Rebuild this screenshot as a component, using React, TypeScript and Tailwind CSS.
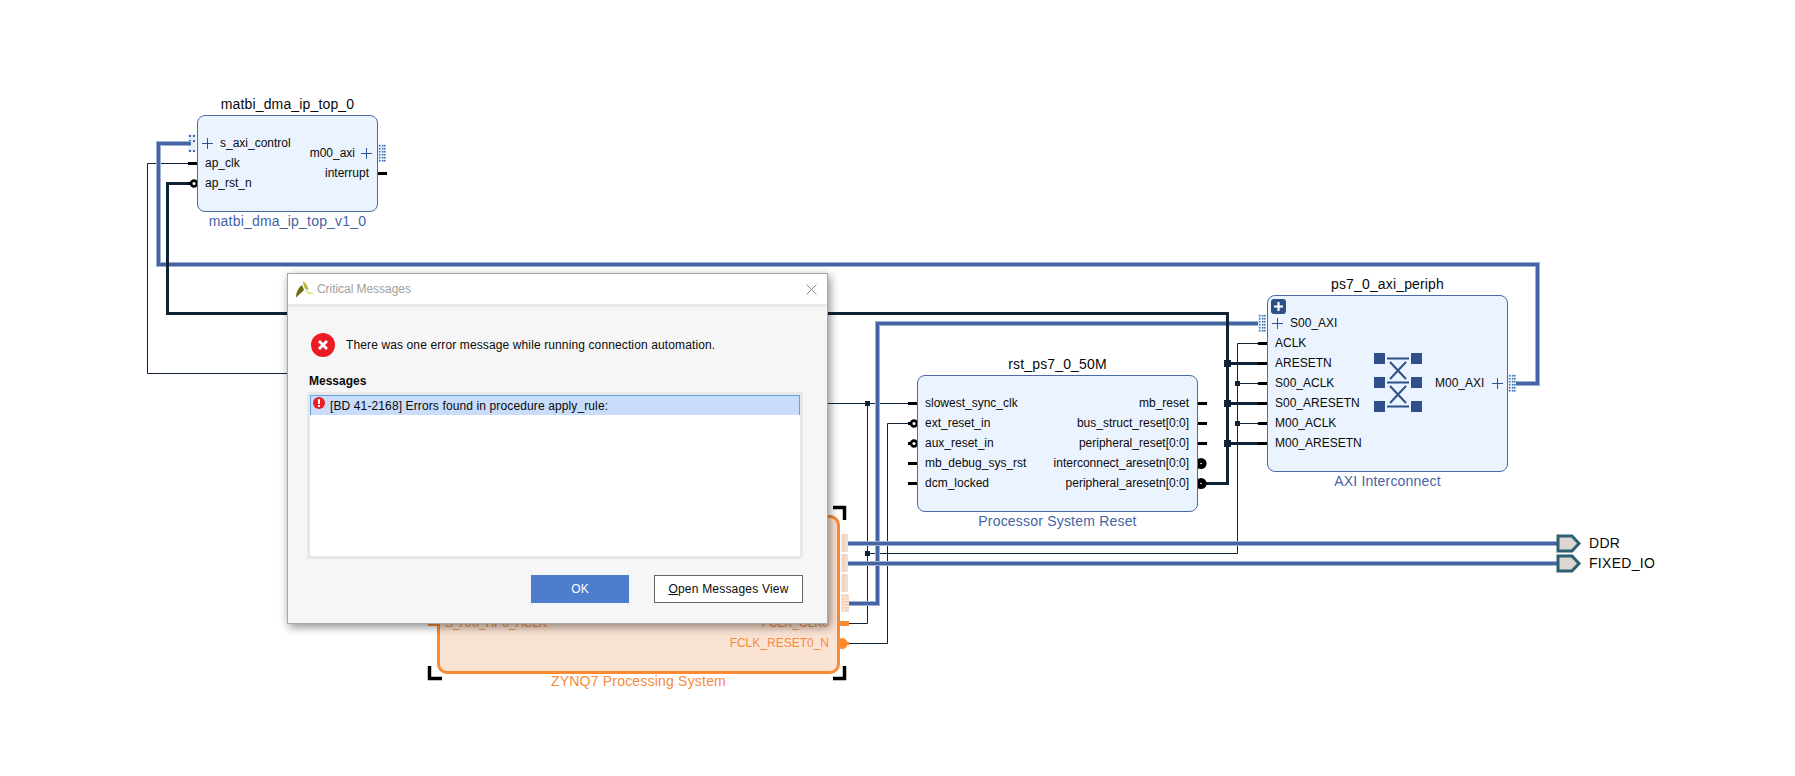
import React from "react";

const BUS = "#4464a4";
const BUS_EDGE = "#9fb1d3";
const NET = "#0f2338";
const ORANGE = "#fb8a33";

function Bus({ d }: { d: string }) {
  return (
    <g fill="none" strokeLinejoin="miter">
      <path d={d} stroke={BUS_EDGE} strokeWidth={5} />
      <path d={d} stroke={BUS} strokeWidth={3} />
    </g>
  );
}
function Thick({ d }: { d: string }) {
  return <path d={d} fill="none" stroke={NET} strokeWidth={3} />;
}
function Thin({ d }: { d: string }) {
  return <path d={d} fill="none" stroke={NET} strokeWidth={1} />;
}
function Dot({ x, y, s = 5 }: { x: number; y: number; s?: number }) {
  return <rect x={x - s / 2} y={y - s / 2} width={s} height={s} fill={NET} />;
}
function Stub({ x, y, w = 9, c = "#000" }: { x: number; y: number; w?: number; c?: string }) {
  return <rect x={x} y={y - 1.5} width={w} height={3} fill={c} />;
}
function Bubble({ x, y }: { x: number; y: number }) {
  return (
    <g>
      <rect x={x - 6} y={y - 1.5} width={5} height={3} fill="#000" />
      <circle cx={x} cy={y} r={2.9} fill="#fff" stroke="#000" strokeWidth={2.6} />
    </g>
  );
}
function FilledBubble({ x, y }: { x: number; y: number }) {
  return (
    <g>
      <circle cx={x} cy={y} r={5.6} fill="#000" />
      <circle cx={x} cy={y} r={0.8} fill="#fff" />
    </g>
  );
}
function DotPort({ x, y, h = 18, fill = "#e6eef9", dot = "#3a70ac" }: { x: number; y: number; h?: number; fill?: string; dot?: string }) {
  const rows = Array.from({ length: Math.floor(h / 3) }, (_, i) => i);
  return (
    <g>
      <rect x={x} y={y} width={8} height={h} fill={fill} />
      {rows.map((r) =>
        [1, 4, 6].map((c) => <rect key={`${r}-${c}`} x={x + c} y={y + 1 + r * 3} width={1.5} height={1.5} fill={dot} />)
      )}
    </g>
  );
}

function Wires() {
  return (
    <svg className="absolute left-0 top-0" width={1795} height={776} viewBox="0 0 1795 776">
      {/* thin nets */}
      <Thin d="M188 163.5H147.5V373.5H300" />
      <Thin d="M790 403.5H908" />
      <Thin d="M867.5 403.5V623.5H846" />
      <Thin d="M867.5 553.5H1237.5V343.5H1260" />
      <Thin d="M1237.5 383.5H1260" />
      <Thin d="M1237.5 423.5H1260" />
      <Thin d="M846 643.5H887.5V423.5H908" />

      {/* interface buses */}
      <rect x={188} y={134} width={8} height={18} fill="#e6eef9" />
      {[135, 140, 150].map((y) => (
        <g key={y}>
          <rect x={189} y={y} width={2} height={2} fill="#3a70ac" />
          <rect x={193} y={y} width={2} height={2} fill="#3a70ac" />
        </g>
      ))}
      <Bus d="M191 143.5H158.5V264.5H1537.5V383.5H1516" />
      <Bus d="M846 603.5H877.5V323.5H1260" />
      <Bus d="M846 543.5H1558" />
      <Bus d="M846 563.5H1558" />

      {/* thick resets */}
      <Thick d="M188 183.5H167.5V313.5H1227.5V483.5H1205" />
      <Thick d="M1227.5 363.5H1258" />
      <Thick d="M1227.5 403.5H1258" />
      <Thick d="M1227.5 443.5H1258" />
      <Dot x={1227.5} y={363.5} s={7} />
      <Dot x={1227.5} y={403.5} s={7} />
      <Dot x={1227.5} y={443.5} s={7} />
      <Dot x={1237.5} y={383.5} />
      <Dot x={1237.5} y={423.5} />
      <Dot x={867.5} y={403.5} />
      <Dot x={867.5} y={553.5} />

      {/* matbi pins */}
      <Stub x={188} y={163.5} />
      <Bubble x={194} y={183.5} />
      <DotPort x={378} y={144} />
      <Stub x={378} y={173.5} />

      {/* rst pins */}
      <Stub x={908} y={403.5} />
      <Bubble x={914} y={423.5} />
      <Bubble x={914} y={443.5} />
      <Stub x={908} y={463.5} />
      <Stub x={908} y={483.5} />
      <Stub x={1198} y={403.5} />
      <Stub x={1198} y={423.5} />
      <Stub x={1198} y={443.5} />
      <FilledBubble x={1201} y={463.5} />
      <FilledBubble x={1201} y={483.5} />

      {/* axi pins */}
      <DotPort x={1258} y={314} />
      <Stub x={1258} y={343.5} />
      <Stub x={1258} y={363.5} />
      <Stub x={1258} y={383.5} />
      <Stub x={1258} y={403.5} />
      <Stub x={1258} y={423.5} />
      <Stub x={1258} y={443.5} />
      <DotPort x={1508} y={374} />

      {/* zynq pins */}
      {[534, 554, 574].map((y) => (
        <g key={y}>
          <rect x={841} y={y} width={7} height={18} fill="#f6dccb" />
          <rect x={843} y={y} width={2} height={18} fill="#ecd5c6" />
        </g>
      ))}
      <DotPort x={841} y={594} h={18} fill="#fae6d9" dot="#f3c3a3" />
      {[543.5, 563.5, 583.5, 603.5].map((y) => (
        <rect key={y} x={826} y={y - 0.5} width={7} height={1} fill={NET} />
      ))}
      <rect x={428} y={621} width={10} height={5} fill={ORANGE} />
      <rect x={839} y={621} width={10} height={5} fill={ORANGE} />
      <circle cx={842} cy={643.5} r={5.5} fill={ORANGE} />
      <rect x={846} y={642} width={3} height={3} fill={ORANGE} />

      {/* selection corners */}
      <path d="M833 507.5H844.5V520" fill="none" stroke="#000" strokeWidth={3.5} />
      <path d="M429.5 666V678.5H442" fill="none" stroke="#000" strokeWidth={3.5} />
      <path d="M844.5 666V678.5H833" fill="none" stroke="#000" strokeWidth={3.5} />

      {/* external ports */}
      {[543.5, 563.5].map((y) => (
        <path key={y} d={`M1558 ${y - 7.5}H1572L1579 ${y}L1572 ${y + 7.5}H1558Z`} fill="#ddd5d0" stroke="#2d6072" strokeWidth={3} />
      ))}
    </svg>
  );
}

function PlusMark({ className = "" }: { className?: string }) {
  return (
    <svg width="11" height="11" viewBox="0 0 11 11" className={`shrink-0 ${className}`}>
      <path d="M0 5.5H11M5.5 0V11" stroke="#2f5590" strokeWidth="1" />
    </svg>
  );
}

function Row({ children }: { children: React.ReactNode }) {
  return <div className="flex h-5 items-center whitespace-nowrap text-[12px] text-[#0a0a0a]">{children}</div>;
}

function Block({
  className,
  boxClass,
  title,
  label,
  children,
}: {
  className: string;
  boxClass: string;
  title: string;
  label: string;
  children: React.ReactNode;
}) {
  return (
    <div className={`absolute flex flex-col items-center ${className}`}>
      <div className="h-5 whitespace-nowrap text-[14px] leading-[18px] tracking-[0.15px] text-[#0a0a0a]">{title}</div>
      <div className={`flex w-full rounded-[8px] border border-[#4a6aa5] bg-[#ebf4fe] ${boxClass}`}>{children}</div>
      <div className="h-[18px] whitespace-nowrap text-[14px] leading-[18px] tracking-[0.2px] text-[#4464a4]">{label}</div>
    </div>
  );
}

function CrossIcon() {
  const sq = [
    [0, 0],
    [37, 0],
    [0, 24],
    [37, 24],
    [0, 48],
    [37, 48],
  ];
  return (
    <svg width="48" height="59" viewBox="0 0 48 59" className="mt-[57px] shrink-0">
      {sq.map(([x, y]) => (
        <rect key={`${x}-${y}`} x={x} y={y} width="11" height="11" fill="#2f5088" />
      ))}
      <path d="M13 5.5H35M13 29.5H35M13 53.5H35" stroke="#2f5088" strokeWidth="2" />
      <path d="M16 9L32 26M32 9L16 26M16 33L32 50M32 33L16 50" stroke="#2f5088" strokeWidth="2" />
    </svg>
  );
}

function Dialog() {
  return (
    <div className="absolute left-[287px] top-[273px] flex h-[351px] w-[541px] flex-col border border-[#a8a8a8] bg-[#f6f6f6] shadow-[2px_3px_9px_rgba(0,0,0,0.45)]">
      <div className="flex h-[30px] items-center justify-between bg-white pl-[8px] pr-[10px]">
        <div className="flex items-center gap-[3px]">
          <svg width="18" height="17" viewBox="0 0 18 17">
            <path d="M7 0C10 2 12 5 12.5 9L9 8C8 5 7 3 7 0Z" fill="#b5b53c" />
            <path d="M9 9L18 12.5C15 14.5 11 14 9 9Z" fill="#dfe48f" />
            <path d="M6 4L8 9C6 11 3 14 0 16.5C0 12 2 7 6 4Z" fill="#6f6a12" />
          </svg>
          <span className="text-[12px] tracking-[-0.05px] text-[#a0a0a0]">Critical Messages</span>
        </div>
        <svg width="11" height="11" viewBox="0 0 11 11">
          <path d="M0.5 0.5L10.5 10.5M10.5 0.5L0.5 10.5" stroke="#8a8a8a" strokeWidth="1" />
        </svg>
      </div>
      <div className="h-[3px] bg-[#e8e8e8]" />
      <div className="flex flex-1 flex-col pl-[19px] pr-[24px]">
        <div className="mt-[26px] flex items-center pl-[4px]">
          <svg width="24" height="24" viewBox="0 0 24 24">
            <circle cx="12" cy="12" r="12" fill="#ec1c24" />
            <path d="M8 8L16 16M16 8L8 16" stroke="#fff" strokeWidth="2.8" />
          </svg>
          <span className="ml-[11px] whitespace-nowrap text-[12px] tracking-[0.12px] text-[#0a0a0a]">There was one error message while running connection automation.</span>
        </div>
        <div className="ml-[2px] mt-[17px] h-[14px] text-[12px] font-bold leading-[14px] text-[#0a0a0a]">Messages</div>
        <div className="mt-[4px] h-[167px] border-[3px] border-[#e8e8e8] bg-white">
          <div className="flex h-[20px] items-center border border-b-0 border-[#62a3e6] bg-[#c9dcf9] pl-[1px]">
            <svg width="14" height="14" viewBox="0 0 14 14" className="mb-[6px]">
              <circle cx="7" cy="7" r="6" fill="#ec1c24" />
              <rect x="6" y="3" width="2" height="5" fill="#fff" />
              <rect x="6" y="9" width="2" height="2" fill="#fff" />
            </svg>
            <span className="ml-[4px] whitespace-nowrap text-[12px] tracking-[0.12px] text-[#0a0a0a]">[BD 41-2168] Errors found in procedure apply_rule:</span>
          </div>
        </div>
        <div className="mt-[16px] flex justify-end gap-[25px]">
          <button className="h-[28px] w-[98px] bg-[#4f7dce] text-[12px] text-white">OK</button>
          <button className="h-[28px] w-[149px] border border-[#666] bg-white text-[12px] tracking-[0.2px] text-[#0a0a0a]">
            <span className="underline">O</span>pen Messages View
          </button>
        </div>
      </div>
    </div>
  );
}

export default function App() {
  return (
    <div className="relative h-[776px] w-[1795px] overflow-hidden bg-white font-['Liberation_Sans',sans-serif]">
      <Wires />

      <Block
        className="left-[197px] top-[95px] w-[181px]"
        boxClass="h-[97px] justify-between"
        title="matbi_dma_ip_top_0"
        label="matbi_dma_ip_top_v1_0"
      >
        <div className="pl-[7px] pt-[17px]">
          <Row>
            <PlusMark className="-ml-[3px] mr-[7px]" />
            s_axi_control
          </Row>
          <Row>ap_clk</Row>
          <Row>ap_rst_n</Row>
        </div>
        <div className="flex flex-col items-end pr-[8px] pt-[27px]">
          <Row>
            m00_axi
            <PlusMark className="-mr-[3px] ml-[6px]" />
          </Row>
          <Row>interrupt</Row>
        </div>
      </Block>

      <Block
        className="left-[917px] top-[355px] w-[281px]"
        boxClass="h-[137px] justify-between"
        title="rst_ps7_0_50M"
        label="Processor System Reset"
      >
        <div className="pl-[7px] pt-[17px]">
          <Row>slowest_sync_clk</Row>
          <Row>ext_reset_in</Row>
          <Row>aux_reset_in</Row>
          <Row>mb_debug_sys_rst</Row>
          <Row>dcm_locked</Row>
        </div>
        <div className="flex flex-col items-end pr-[8px] pt-[17px]">
          <Row>mb_reset</Row>
          <Row>bus_struct_reset[0:0]</Row>
          <Row>peripheral_reset[0:0]</Row>
          <Row>interconnect_aresetn[0:0]</Row>
          <Row>peripheral_aresetn[0:0]</Row>
        </div>
      </Block>

      <Block
        className="left-[1267px] top-[275px] w-[241px]"
        boxClass="h-[177px]"
        title="ps7_0_axi_periph"
        label="AXI Interconnect"
      >
        <div className="w-[106px] shrink-0 pl-[7px] pt-[3px]">
          <div className="-mb-[1px] -ml-[4px] flex h-[15px] w-[15px] items-center justify-center rounded-[3px] bg-[#2d5086]">
            <svg width="9" height="9" viewBox="0 0 9 9">
              <path d="M0 4.5H9M4.5 0V9" stroke="#fff" strokeWidth="2.2" />
            </svg>
          </div>
          <Row>
            <PlusMark className="-ml-[3px] mr-[7px]" />
            S00_AXI
          </Row>
          <Row>ACLK</Row>
          <Row>ARESETN</Row>
          <Row>S00_ACLK</Row>
          <Row>S00_ARESETN</Row>
          <Row>M00_ACLK</Row>
          <Row>M00_ARESETN</Row>
        </div>
        <CrossIcon />
        <div className="ml-[13px] pt-[77px]">
          <Row>
            M00_AXI
            <PlusMark className="ml-[8px]" />
          </Row>
        </div>
      </Block>

      <div className="absolute left-[437px] top-[515px] flex flex-col items-center">
        <div className="flex h-[159px] w-[403px] justify-between rounded-[10px] border-[3px] border-[#fb8a33] bg-[#fbe3d3] text-[12px] text-[#f58a3c]">
          <div className="pl-[5px] pt-[95px]">
            <div className="flex h-5 items-center whitespace-nowrap">S_AXI_HP0_ACLK</div>
          </div>
          <div className="flex flex-col items-end pr-[8px] pt-[95px]">
            <div className="flex h-5 items-center whitespace-nowrap">FCLK_CLK0</div>
            <div className="flex h-5 items-center whitespace-nowrap">FCLK_RESET0_N</div>
          </div>
        </div>
        <div className="-mt-[2px] h-[18px] whitespace-nowrap text-[14px] leading-[18px] tracking-[0.2px] text-[#f58a3c]">ZYNQ7 Processing System</div>
      </div>

      <div className="absolute left-[1589px] top-[533px] h-5 whitespace-nowrap text-[14px] leading-5 tracking-[0.3px] text-[#0a0a0a]">DDR</div>
      <div className="absolute left-[1589px] top-[553px] h-5 whitespace-nowrap text-[14px] leading-5 tracking-[0.3px] text-[#0a0a0a]">FIXED_IO</div>

      <Dialog />
    </div>
  );
}
